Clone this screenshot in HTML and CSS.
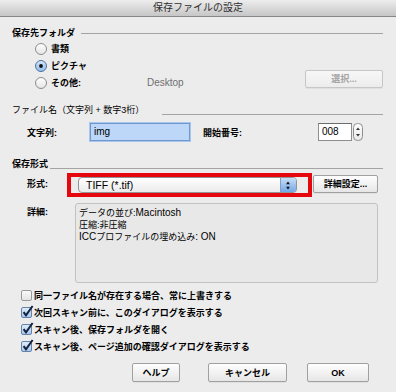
FILE: index.html
```html
<!doctype html>
<html lang="ja">
<head>
  <meta charset="utf-8">
  <title>保存ファイルの設定</title>
  <link rel="stylesheet" href="styles.css">
</head>
<body>
  <div class="window">
    <div class="titlebar">保存ファイルの設定</div>

    <div class="content">
      <div class="head head-folder">
        <span>保存先フォルダ</span><i class="rule"></i>
      </div>
      <div class="radios">
        <div class="radio-row">
          <svg class="radio" width="12" height="12" viewBox="0 0 12 12"><circle cx="6" cy="6" r="5.5" fill="url(#radioOff)" stroke="#8c8c8c"/></svg>
          <span class="lbl">書類</span>
        </div>
        <div class="radio-row">
          <svg class="radio" width="12" height="12" viewBox="0 0 12 12"><circle cx="6" cy="6" r="5.5" fill="url(#radioOn)" stroke="#50739f"/><circle cx="6" cy="6" r="1.9" fill="#111"/></svg>
          <span class="lbl">ピクチャ</span>
        </div>
        <div class="radio-row">
          <svg class="radio" width="12" height="12" viewBox="0 0 12 12"><circle cx="6" cy="6" r="5.5" fill="url(#radioOff)" stroke="#8c8c8c"/></svg>
          <span class="lbl other">その他:</span>
          <span class="path">Desktop</span>
          <span class="btn btn-choose disabled">選択...</span>
        </div>
      </div>

      <div class="head head-name">
        <span class="regular">ファイル名（文字列 + 数字3桁）</span><i class="rule low"></i>
      </div>
      <div class="name-row">
        <span class="lbl lbl-str">文字列:</span>
        <span class="field field-focus">img</span>
        <span class="lbl lbl-num">開始番号:</span>
        <span class="field field-num">008</span>
        <svg class="stepper" width="10" height="18" viewBox="0 0 10 18">
          <rect x="0.5" y="0.5" width="9" height="17" rx="4" fill="url(#stepBg)" stroke="#8e8e8e"/>
          <path d="M5 4.5 L7 7 L3 7 Z" fill="#333"/>
          <path d="M5 13.5 L7 11 L3 11 Z" fill="#333"/>
        </svg>
      </div>

      <div class="head head-format">
        <span>保存形式</span><i class="rule low"></i>
      </div>
      <div class="format-row">
        <span class="lbl lbl-fmt">形式:</span>
        <div class="mark">
          <div class="select">
            <span class="select-text">TIFF (*.tif)</span>
            <span class="select-arrow">
              <svg width="16" height="15" viewBox="0 0 16 15">
                <path d="M8 3.5 L10 6.3 L6 6.3 Z" fill="#111"/>
                <path d="M8 11.5 L10 8.7 L6 8.7 Z" fill="#111"/>
              </svg>
            </span>
          </div>
        </div>
        <span class="btn btn-detail">詳細設定...</span>
      </div>

      <div class="detail-row">
        <span class="lbl lbl-detail">詳細:</span>
        <div class="detail-box">
          <div>データの並び:<span class="en">Macintosh</span></div>
          <div>圧縮:非圧縮</div>
          <div><span class="en">ICC</span>プロファイルの埋め込み<span class="en">: ON</span></div>
        </div>
      </div>

      <div class="checks">
        <div class="check-row">
          <svg class="check" width="13" height="13" viewBox="0 0 13 13"><rect x="0.5" y="2.5" width="10" height="10" rx="1.5" fill="url(#boxOff)" stroke="#9a9a9a"/></svg>
          <span class="lbl">同一ファイル名が存在する場合、常に上書きする</span>
        </div>
        <div class="check-row">
          <svg class="check" width="13" height="13" viewBox="0 0 13 13"><rect x="0.5" y="2.5" width="10" height="10" rx="1.5" fill="url(#boxOn)" stroke="#6582ab"/><path d="M2.6 7.2 L5 10.4 L11.6 1" fill="none" stroke="#14223d" stroke-width="2"/></svg>
          <span class="lbl">次回スキャン前に、このダイアログを表示する</span>
        </div>
        <div class="check-row">
          <svg class="check" width="13" height="13" viewBox="0 0 13 13"><rect x="0.5" y="2.5" width="10" height="10" rx="1.5" fill="url(#boxOn)" stroke="#6582ab"/><path d="M2.6 7.2 L5 10.4 L11.6 1" fill="none" stroke="#14223d" stroke-width="2"/></svg>
          <span class="lbl">スキャン後、保存フォルダを開く</span>
        </div>
        <div class="check-row">
          <svg class="check" width="13" height="13" viewBox="0 0 13 13"><rect x="0.5" y="2.5" width="10" height="10" rx="1.5" fill="url(#boxOn)" stroke="#6582ab"/><path d="M2.6 7.2 L5 10.4 L11.6 1" fill="none" stroke="#14223d" stroke-width="2"/></svg>
          <span class="lbl">スキャン後、ページ追加の確認ダイアログを表示する</span>
        </div>
      </div>

      <div class="buttons">
        <span class="btn btn-help">ヘルプ</span>
        <span class="btn btn-cancel">キャンセル</span>
        <span class="btn btn-ok">OK</span>
      </div>
    </div>
  </div>

  <svg width="0" height="0" class="defs">
    <defs>
      <linearGradient id="radioOff" x1="0" y1="0" x2="0" y2="1">
        <stop offset="0" stop-color="#ffffff"/>
        <stop offset="1" stop-color="#e4e4e4"/>
      </linearGradient>
      <linearGradient id="radioOn" x1="0" y1="0" x2="0" y2="1">
        <stop offset="0" stop-color="#d6e6f8"/>
        <stop offset="1" stop-color="#8fbbec"/>
      </linearGradient>
      <linearGradient id="boxOff" x1="0" y1="0" x2="0" y2="1">
        <stop offset="0" stop-color="#fbfbfb"/>
        <stop offset="1" stop-color="#e2e2e2"/>
      </linearGradient>
      <linearGradient id="boxOn" x1="0" y1="0" x2="0" y2="1">
        <stop offset="0" stop-color="#e2edf9"/>
        <stop offset="1" stop-color="#a4c6ee"/>
      </linearGradient>
      <linearGradient id="stepBg" x1="0" y1="0" x2="0" y2="1">
        <stop offset="0" stop-color="#ffffff"/>
        <stop offset="1" stop-color="#e8e8e8"/>
      </linearGradient>
    </defs>
  </svg>
</body>
</html>
```

FILE: styles.css
```css
* {
  box-sizing: border-box;
}

body {
  margin: 0;
  background: #ececec;
  font-family: "Liberation Sans", "Noto Sans CJK JP", sans-serif;
  font-size: 9px;
  color: #000;
}

.defs {
  position: absolute;
}

.window {
  width: 396px;
  height: 392px;
  background: #ececec;
  overflow: hidden;
}

.titlebar {
  height: 17px;
  line-height: 16px;
  text-align: center;
  font-size: 10px;
  color: #2e2e2e;
  background: linear-gradient(#ededed, #c6c6c6);
  border-bottom: 1px solid #878787;
  border-radius: 4px 4px 0 0;
}

.content {
  padding: 9px 13px 0 12px;
}

/* section headers */
.head {
  display: flex;
  height: 14px;
  line-height: 14px;
  font-weight: 700;
}

.head .regular {
  font-weight: 400;
}

.rule {
  flex: 1;
  align-self: center;
  height: 1px;
  background: #a4a4a4;
}

.rule.low {
  align-self: flex-end;
  margin-bottom: 2px;
}

.head-folder .rule {
  margin-left: 6px;
}

.head-name {
  margin-top: 12px;
}

.head-name .rule {
  margin-left: 18px;
}

.head-format {
  margin-top: 16px;
}

.head-format .rule {
  margin-left: 2px;
}

.lbl {
  font-weight: 700;
  white-space: nowrap;
}

.en {
  font-size: 10px;
}

/* radios */
.radios {
  padding-left: 23px;
}

.radio-row {
  display: flex;
  align-items: center;
  height: 17px;
}

.radio {
  flex: none;
  margin-right: 4px;
}

.other {
  width: 96px;
}

.path {
  font-size: 10px;
  color: #6f6f6f;
}

/* buttons */
.btn {
  display: flex;
  align-items: center;
  justify-content: center;
  height: 19px;
  font-weight: 700;
  background: linear-gradient(#fefefe, #e6e6e6);
  border: 1px solid #a0a0a0;
  border-radius: 2px;
  box-shadow: 0 1px 0 rgba(0, 0, 0, 0.05);
}

.btn.disabled {
  color: #a3a3a3;
  background: linear-gradient(#f7f7f7, #ececec);
  border-color: #c6c6c6;
}

.btn-choose {
  width: 78px;
  height: 18px;
  margin-left: auto;
  margin-bottom: 8px;
}

/* file name row */
.name-row {
  display: flex;
  align-items: center;
  height: 18px;
  margin-top: 6px;
  padding-left: 15px;
}

.lbl-str {
  width: 63px;
}

.field {
  height: 18px;
  line-height: 16px;
  font-size: 10px;
  padding-left: 3px;
  background: #fff;
  border: 1px solid #8e8e8e;
  border-top-color: #6c6c6c;
}

.field-focus {
  width: 100px;
  background: #bcd7f8;
  border-color: #6e98cf;
  box-shadow: 0 0 0 1px #a9c6ec;
}

.lbl-num {
  width: 115px;
  margin-left: 13px;
}

.field-num {
  width: 34px;
}

.stepper {
  margin-left: 1px;
  flex: none;
}

/* format row */
.format-row {
  display: flex;
  align-items: center;
  margin-top: 2px;
  padding-left: 15px;
}

.lbl-fmt {
  width: 40px;
  margin-bottom: 4px;
}

.mark {
  border: 4px solid #e5060e;
  padding: 0 11px 0 7px;
}

.select {
  display: flex;
  width: 219px;
  height: 16px;
  background: linear-gradient(#ffffff, #ebebeb);
  border: 1px solid #949494;
  border-radius: 4px;
  overflow: hidden;
}

.select-text {
  flex: 1;
  font-size: 10.5px;
  line-height: 14px;
  padding-left: 7px;
}

.select-arrow {
  width: 16px;
  border-left: 1px solid #7d9fc9;
  background: linear-gradient(#c9def6, #72a7e6);
}

.select-arrow svg {
  display: block;
  margin-left: -1px;
}

.btn-detail {
  width: 65px;
  height: 18px;
  margin-left: 1px;
  margin-bottom: 3px;
}

/* details */
.detail-row {
  display: flex;
  margin-top: 6px;
  padding-left: 15px;
}

.lbl-detail {
  width: 48px;
  line-height: 12px;
  padding-top: 3px;
}

.detail-box {
  width: 303px;
  height: 80px;
  padding: 3px 0 0 3px;
  line-height: 11.5px;
  background: #e8e8e8;
  border: 1px solid #c2c2c2;
  border-radius: 3px;
}

/* checkboxes */
.checks {
  margin-top: 4px;
  padding-left: 9px;
}

.check-row {
  display: flex;
  align-items: center;
  height: 17px;
}

.check {
  flex: none;
  margin-top: -2px;
}

/* bottom buttons */
.buttons {
  display: flex;
  justify-content: flex-end;
  margin-top: 8px;
  margin-right: 14px;
}

.btn-help {
  width: 48px;
}

.btn-cancel {
  width: 79px;
  margin-left: 28px;
}

.btn-ok {
  width: 62px;
  margin-left: 20px;
}
```
